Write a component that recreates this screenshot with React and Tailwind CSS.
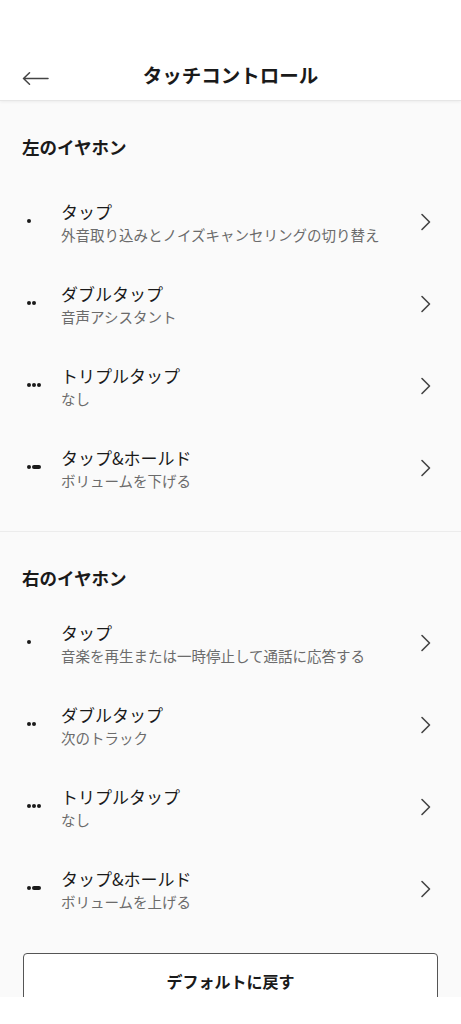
import React from 'react'

const left = [
  { kind: 1, title: 'タップ', sub: '外音取り込みとノイズキャンセリングの切り替え' },
  { kind: 2, title: 'ダブルタップ', sub: '音声アシスタント' },
  { kind: 3, title: 'トリプルタップ', sub: 'なし' },
  { kind: 4, title: 'タップ&ホールド', sub: 'ボリュームを下げる' },
]

const right = [
  { kind: 1, title: 'タップ', sub: '音楽を再生または一時停止して通話に応答する' },
  { kind: 2, title: 'ダブルタップ', sub: '次のトラック' },
  { kind: 3, title: 'トリプルタップ', sub: 'なし' },
  { kind: 4, title: 'タップ&ホールド', sub: 'ボリュームを上げる' },
]

const Dot = () => <span className="w-[3.5px] h-[3.5px] rounded-full bg-[#1a1a1a]" />

const Indicator = ({ kind }) => (
  <div className="w-[39px] shrink-0 pl-[5px] pt-[19px]">
    <div className="flex items-center gap-[1.5px] h-[4px]">
      {kind === 4 ? (
        <>
          <Dot />
          <span className="w-[9px] h-[3.5px] rounded-full bg-[#1a1a1a]" />
        </>
      ) : (
        Array.from({ length: kind }).map((_, i) => <Dot key={i} />)
      )}
    </div>
  </div>
)

const Chevron = () => (
  <svg width="12" height="18" viewBox="0 0 12 18" fill="none" className="shrink-0 -mt-[3px]">
    <path d="M2 1.5 L9.5 9 L2 16.5" stroke="#444" strokeWidth="1.6" strokeLinecap="round" strokeLinejoin="round" />
  </svg>
)

const Row = ({ item }) => (
  <div className="h-[82px] flex items-center pl-[22px] pr-[29px]">
    <div className="flex flex-1 items-start">
      <Indicator kind={item.kind} />
      <div className="flex flex-col">
        <span className="text-[17px] leading-[24px] text-[#1a1a1a]">{item.title}</span>
        <span className="text-[14.5px] leading-[22px] text-[#6b6b6b]">{item.sub}</span>
      </div>
    </div>
    <Chevron />
  </div>
)

const App = () => {
  return (
    <div
      className="w-[461px] h-[997px] overflow-hidden bg-[#fafafa]"
      style={{ fontFamily: '"Noto Sans CJK JP", "Noto Sans", sans-serif' }}
    >
      <header className="h-[101px] bg-white pt-[50px] border-b border-[#e6e6e6] shadow-[0_1px_3px_rgba(0,0,0,0.06)]">
        <div className="h-[50px] flex items-center relative">
          <div className="absolute left-[22px] top-[22px]">
            <svg width="27" height="13" viewBox="0 0 27 13" fill="none">
              <path d="M1.5 6.5 H26 M7.5 0.8 L1.5 6.5 L7.5 12.2" stroke="#444" strokeWidth="1.5" strokeLinecap="round" strokeLinejoin="round" />
            </svg>
          </div>
          <h1 className="flex-1 text-center text-[19.5px] font-bold text-[#1a1a1a]">タッチコントロール</h1>
        </div>
      </header>

      <section className="pt-[34px] pb-[21px]">
        <h2 className="px-[22px] text-[17.5px] leading-[24px] font-bold text-[#1a1a1a]">左のイヤホン</h2>
        <div className="mt-[23px]">
          {left.map((it, i) => (
            <Row key={i} item={it} />
          ))}
        </div>
      </section>

      <div className="h-[1px] bg-[#ececec]" />

      <section className="pt-[34px]">
        <h2 className="px-[22px] text-[17.5px] leading-[24px] font-bold text-[#1a1a1a]">右のイヤホン</h2>
        <div className="mt-[13px]">
          {right.map((it, i) => (
            <Row key={i} item={it} />
          ))}
        </div>
      </section>

      <div className="px-[23px] mt-[22px]">
        <button className="w-full h-[56px] border-[1.5px] border-[#555] rounded-[4px] bg-white text-[16px] font-bold text-[#1a1a1a]">
          デフォルトに戻す
        </button>
      </div>
    </div>
  )
}

export default App
